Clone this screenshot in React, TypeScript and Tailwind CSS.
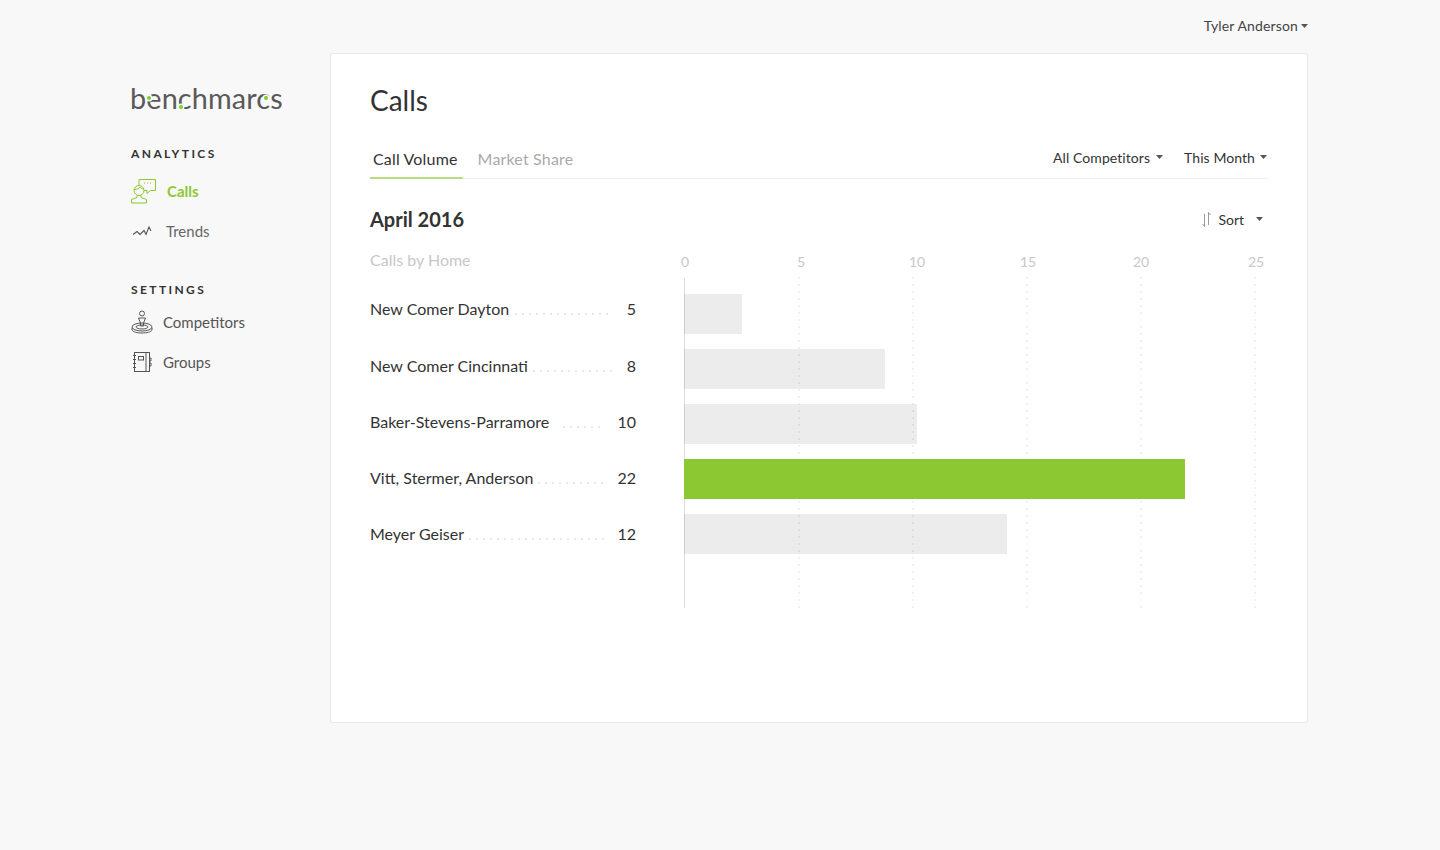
const rows = [
  { name: "New Comer Dayton", value: 5, dots: "ml-[6px] w-[94px]", bar: "w-[58px]", gap: "mt-0" },
  { name: "New Comer Cincinnati", value: 8, dots: "ml-[5px] w-[80px]", bar: "w-[201px]", gap: "mt-[15px]" },
  { name: "Baker-Stevens-Parramore", value: 10, dots: "ml-[14px] w-[38px]", bar: "w-[233px]", gap: "mt-[15px]" },
  { name: "Vitt, Stermer, Anderson", value: 22, dots: "ml-[5px] w-[67px]", bar: "w-[501px]", gap: "mt-[15px]" },
  { name: "Meyer Geiser", value: 12, dots: "ml-[5px] w-[136px]", bar: "w-[323px]", gap: "mt-[15px]" },
];

const ticks = [
  { label: "0", gap: "ml-0" },
  { label: "5", gap: "ml-[96px]" },
  { label: "10", gap: "ml-[96px]" },
  { label: "15", gap: "ml-[91px]" },
  { label: "20", gap: "ml-[93px]" },
  { label: "25", gap: "ml-[95px]" },
];

const dotRow = "h-[2px] bg-[linear-gradient(to_right,#e8e8e8_2px,transparent_2px)] bg-[length:7px_2px]";
const gridLine = "absolute -top-px bottom-0 w-[2px] bg-[linear-gradient(to_bottom,#f0f0f0_2px,transparent_2px)] bg-[length:2px_7px]";

function Caret() {
  return (
    <svg width="7" height="4" viewBox="0 0 7 4" className="shrink-0" fill="#555">
      <path d="M0 0h7L3.500 4z" />
    </svg>
  );
}

function CallsIcon() {
  return (
    <svg width="26" height="26" viewBox="0 0 26 26" fill="none" stroke="#8cc832" strokeWidth="1">
      <path d="M8 7V1.500h16.500v11h-5l-3.500 3v-3h-3" />
      <circle cx="8" cy="12.500" r="5" />
      <path d="M3 11.500c3 0 5-1 6-2.500 1 1 2 2 4 2" />
      <path d="M6 17.500v2L.5 21.500v3.500h15v-3.500L10 19.500v-2" />
      <path d="M13 5h1M16 5h1M19 5h1" />
    </svg>
  );
}

function TrendsIcon() {
  return (
    <svg width="20" height="12" viewBox="0 0 20 12" fill="none" stroke="#555" strokeWidth="1.100">
      <path d="M1 8.500l4-3 3 3 4-4 2 4 3-7.500 2 4" />
    </svg>
  );
}

function CompetitorsIcon() {
  return (
    <svg width="22" height="24" viewBox="0 0 22 24" fill="none" stroke="#555" strokeWidth="1">
      <circle cx="11" cy="3.500" r="2.500" />
      <path d="M7.500 8h7l-2 5v3h-3v-3z" />
      <ellipse cx="11" cy="17" rx="10" ry="4" />
      <ellipse cx="11" cy="17" rx="6" ry="2" />
      <path d="M1 18v2c1 2 5 3 10 3s9-1 10-3v-2" />
    </svg>
  );
}

function GroupsIcon() {
  return (
    <svg width="20" height="22" viewBox="0 0 20 22" fill="none" stroke="#555" strokeWidth="1">
      <rect x="2.500" y="1.500" width="15" height="19" />
      <path d="M1 4.500h3M1 8.500h3M1 12.500h3M1 16.500h3M14 1.500v19" />
      <rect x="6.500" y="5.500" width="5" height="3.500" />
      <path d="M17.500 7h1.500v3h-1.500M17.500 12h1.500v3h-1.500" />
    </svg>
  );
}

function SortIcon() {
  return (
    <svg width="10" height="15" viewBox="0 0 10 15" fill="none" stroke="#999" strokeWidth="1">
      <path d="M2.500 2v12.500M.5 12l2 2.500M6.500 13V.5L8.500 3" />
    </svg>
  );
}

function Logo() {
  return (
    <div className="relative -ml-px h-[34px] w-[154px] text-[28.800px] leading-[34px] font-normal tracking-[0.15px] text-[#5a5a5a] font-['Lato',sans-serif]">
      benchmarcs
      <span className="absolute left-[17px] top-[15px] h-[4px] w-[4px] rounded-full bg-[#7ed321] ring-[1.500px] ring-[#f8f8f8]" />
      <span className="absolute left-[49px] top-[24px] h-[4px] w-[4px] rounded-full bg-[#7ed321] ring-[1.500px] ring-[#f8f8f8]" />
      <span className="absolute left-[134px] top-[15px] h-[4px] w-[4px] rounded-full bg-[#7ed321] ring-[1.500px] ring-[#f8f8f8]" />
    </div>
  );
}

export default function App() {
  return (
    <div className="min-h-[850px] bg-[#f8f8f8] font-['Lato',sans-serif] text-[#333]">
      <header className="flex h-[53px] items-center justify-end gap-[3px] pb-[2px] pr-[132px] text-[14px] tracking-[0.14px] text-[#444]">
        Tyler Anderson
        <Caret />
      </header>

      <div className="flex pl-[131px]">
        <aside className="w-[199px] shrink-0 pt-[28px]">
          <Logo />
          <h3 className="mt-[31px] text-[12px] leading-[16px] font-bold tracking-[2.400px] text-[#333]">ANALYTICS</h3>
          <nav className="mt-[16px] flex items-center gap-[10px] text-[15px] font-bold text-[#8cc832]">
            <CallsIcon />
            Calls
          </nav>
          <nav className="mt-[14px] flex h-[27px] items-center gap-[14px] pl-[1px] text-[15px] text-[#666]">
            <TrendsIcon />
            Trends
          </nav>
          <h3 className="mt-[37px] text-[12px] leading-[16px] font-bold tracking-[2.400px] text-[#333]">SETTINGS</h3>
          <nav className="mt-[11px] flex h-[26px] items-center gap-[10px] text-[15px] text-[#555]">
            <CompetitorsIcon />
            Competitors
          </nav>
          <nav className="mt-[14px] flex h-[26px] items-center gap-[11px] pl-[1px] text-[15px] text-[#555]">
            <GroupsIcon />
            Groups
          </nav>
        </aside>

        <main className="h-[670px] w-[978px] shrink-0 rounded-[2px] border border-[#e8e8e8] bg-white px-[39px]">
          <h1 className="mt-[27px] text-[28px] leading-[38px] font-normal text-[#333]">Calls</h1>

          <div className="mt-[21px] flex h-[39px] items-stretch justify-between border-b border-[#eeeeee]">
            <div className="flex text-[16px] tracking-[0.17px]">
              <div className="-mb-px flex items-center border-b-2 border-[#b8dc80] pl-[3px] pr-[5px] text-[#333]">Call Volume</div>
              <div className="flex items-center pl-[15px] text-[#aaaaaa]">Market Share</div>
            </div>
            <div className="flex items-center gap-[21px] pb-[4px] pr-[1px] text-[14px] tracking-[0.07px]">
              <span className="flex items-center gap-[6px]">All Competitors <Caret /></span>
              <span className="flex items-center gap-[5px]">This Month <Caret /></span>
            </div>
          </div>

          <div className="mt-[26px] flex items-center justify-between">
            <h2 className="text-[20px] leading-[28px] font-bold text-[#333]">April 2016</h2>
            <span className="flex items-center gap-[6px] pr-[5px] text-[14px]"><SortIcon /> Sort <span className="ml-[6px] flex"><Caret /></span></span>
          </div>

          <div className="mt-[15px] flex">
            <div className="w-[266px] shrink-0">
              <div className="text-[16px] leading-[24px] text-[#c8c8c8]">Calls by Home</div>
              <ul className="mt-[25px] flex flex-col text-[16px] leading-[24px] text-[#333]">
                {rows.map((row, i) => (
                  <li key={row.name} className={"flex h-[24px] items-center " + (i === 0 ? "" : i === 1 ? "mt-[33px]" : "mt-[32px]")}>
                    <span>{row.name}</span>
                    <span className={"mt-[9px] " + dotRow + " " + row.dots} />
                    <span className="ml-auto">{row.value}</span>
                  </li>
                ))}
              </ul>
            </div>

            <div className="ml-[48px] w-[584px] shrink-0">
              <div className="-ml-[9px] flex h-[30px] pt-[2px] text-[14px] leading-[24px] text-[#c8c8c8]">
                {ticks.map((tick) => (
                  <span key={tick.label} className={"w-[20px] shrink-0 text-center " + tick.gap}>{tick.label}</span>
                ))}
              </div>
              <div className="relative h-[330px] border-l border-[#dddddd] pt-[16px]">
                <div className={gridLine + " left-[113px]"} />
                <div className={gridLine + " left-[227px]"} />
                <div className={gridLine + " left-[341px]"} />
                <div className={gridLine + " left-[455px]"} />
                <div className={gridLine + " left-[569px]"} />
                {rows.map((row) => (
                  <div
                    key={row.name}
                    className={"relative -ml-px h-[40px] " + row.bar + " " + row.gap + " " + (row.value === 22 ? "bg-[#8cc832]" : "bg-black/[0.075]")}
                  />
                ))}
              </div>
            </div>
          </div>
        </main>
      </div>
    </div>
  );
}
